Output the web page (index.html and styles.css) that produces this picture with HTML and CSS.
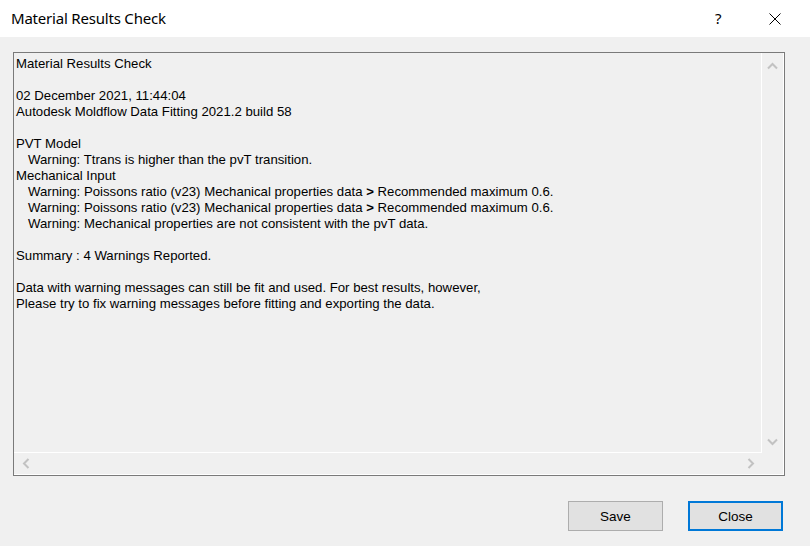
FILE: index.html
```html
<!DOCTYPE html>
<html>
<head>
<meta charset="utf-8">
<link rel="stylesheet" href="styles.css">
</head>
<body>
<div class="dialog">
  <div class="titlebar">
    <div class="title">Material Results Check</div>
    <div class="help">?</div>
    <div class="close-x">
      <svg width="12" height="12" viewBox="0 0 12 12"><path d="M0.5 0.5 L11.5 11.5 M11.5 0.5 L0.5 11.5" stroke="#000" stroke-width="1" fill="none"/></svg>
    </div>
  </div>
  <div class="main">
    <div class="box">
      <div class="box-inner">
        <div class="content">
          <div class="line">Material Results Check</div>
          <div class="line">&nbsp;</div>
          <div class="line">02 December 2021, 11:44:04</div>
          <div class="line">Autodesk Moldflow Data Fitting 2021.2 build 58</div>
          <div class="line">&nbsp;</div>
          <div class="line">PVT Model</div>
          <div class="line ind">Warning: Ttrans is higher than the pvT transition.</div>
          <div class="line">Mechanical Input</div>
          <div class="line ind">Warning: Poissons ratio (v23) Mechanical properties data <b class="gt">&gt;</b> Recommended maximum 0.6.</div>
          <div class="line ind">Warning: Poissons ratio (v23) Mechanical properties data <b class="gt">&gt;</b> Recommended maximum 0.6.</div>
          <div class="line ind">Warning: Mechanical properties are not consistent with the pvT data.</div>
          <div class="line">&nbsp;</div>
          <div class="line">Summary : 4 Warnings Reported.</div>
          <div class="line">&nbsp;</div>
          <div class="line">Data with warning messages can still be fit and used. For best results, however,</div>
          <div class="line">Please try to fix warning messages before fitting and exporting the data.</div>
        </div>
        <div class="vscroll">
          <svg width="11" height="8" viewBox="0 0 11 8"><path d="M1 6.5 L5.5 2 L10 6.5" stroke="#c2c2c2" stroke-width="2" fill="none"/></svg>
          <svg width="11" height="8" viewBox="0 0 11 8"><path d="M1 1.5 L5.5 6 L10 1.5" stroke="#c2c2c2" stroke-width="2" fill="none"/></svg>
        </div>
        <div class="hscroll">
          <svg width="8" height="11" viewBox="0 0 8 11"><path d="M6.5 1 L2 5.5 L6.5 10" stroke="#c2c2c2" stroke-width="2" fill="none"/></svg>
          <svg width="8" height="11" viewBox="0 0 8 11"><path d="M1.5 1 L6 5.5 L1.5 10" stroke="#c2c2c2" stroke-width="2" fill="none"/></svg>
        </div>
        <div class="corner"></div>
      </div>
    </div>
    <div class="buttons">
      <div class="btn">Save</div>
      <div class="btn default">Close</div>
    </div>
  </div>
</div>
</body>
</html>
```

FILE: styles.css
```css
html, body {
  margin: 0;
  padding: 0;
}
body {
  width: 810px;
  height: 546px;
  background: #f0f0f0;
  overflow: hidden;
}
.dialog {
  display: flex;
  flex-direction: column;
  height: 546px;
}
.titlebar {
  height: 37px;
  background: #ffffff;
  display: flex;
  align-items: center;
  padding-left: 11px;
  padding-right: 29px;
}
.title {
  font-family: "Noto Sans", "Open Sans", sans-serif;
  font-size: 15px;
  color: #000;
  flex: 1;
  letter-spacing: -0.2px;
  margin-top: -1px;
}
.help {
  font-family: "Noto Sans", "Open Sans", sans-serif;
  font-size: 15px;
  color: #000;
  width: 10px;
  margin-right: 44px;
  margin-top: -1px;
}
.close-x {
  width: 12px;
  height: 12px;
  display: flex;
}
.main {
  flex: 1;
  display: flex;
  flex-direction: column;
  padding: 15px 25px 0 13px;
}
.box {
  height: 422px;
  border: 1px solid #7a7a7a;
  display: flex;
}
.box-inner {
  flex: 1;
  border-right: 1px solid #ffffff;
  border-bottom: 1px solid #ffffff;
  display: grid;
  grid-template-columns: 1fr 21px;
  grid-template-rows: 1fr 21px;
}
.content {
  border-right: 1px solid #ffffff;
  border-bottom: 1px solid #ffffff;
  padding: 3px 0 0 2px;
  font-family: "Liberation Sans", Arial, sans-serif;
  font-size: 13.2px;
  line-height: 16px;
  color: #000;
  overflow: hidden;
}
.line {
  white-space: nowrap;
  height: 16px;
}
.ind {
  padding-left: 12px;
}
.gt {
  font-weight: bold;
}
.vscroll {
  display: flex;
  flex-direction: column;
  align-items: center;
  justify-content: space-between;
  padding: 9px 0 7px 0;
}
.hscroll {
  display: flex;
  align-items: center;
  justify-content: space-between;
  padding: 0 7px 0 8px;
}
.corner {
}
.buttons {
  display: flex;
  justify-content: flex-end;
  gap: 25px;
  margin-top: 25px;
  padding-right: 2px;
}
.btn {
  width: 93px;
  height: 28px;
  border: 1px solid #adadad;
  background: #e1e1e1;
  display: flex;
  align-items: center;
  justify-content: center;
  font-family: "Liberation Sans", Arial, sans-serif;
  font-size: 13.5px;
  color: #000;
}
.btn.default {
  width: 91px;
  height: 26px;
  border: 2px solid #0078d7;
}
```
